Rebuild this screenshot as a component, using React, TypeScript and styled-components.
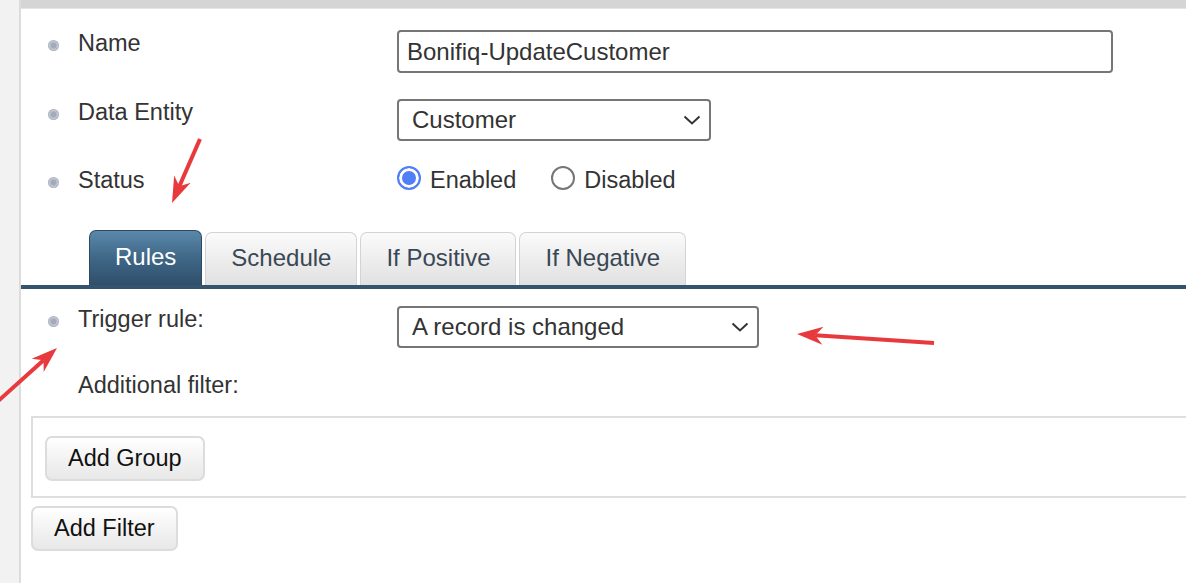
import React, { useState } from "react"
import styled, { createGlobalStyle, css } from "styled-components"

const GlobalStyle = createGlobalStyle`
  html, body {
    margin: 0;
    padding: 0;
    height: 100%;
    background: #ffffff;
    font-family: "Liberation Sans", Arial, sans-serif;
    color: #333333;
  }
  #root {
    min-height: 100vh;
  }
`

const Page = styled.div`
  position: relative;
  display: flex;
  min-height: 100vh;
  overflow: hidden;
`

const SideStrip = styled.div`
  width: 19px;
  flex: none;
  background: #f2f2f2;
  border-right: 2px solid #dcdcdc;
`

const Main = styled.div`
  flex: 1;
  display: flex;
  flex-direction: column;
  min-width: 0;
`

const TopBar = styled.div`
  height: 8px;
  background: #d5d5d5;
  border-bottom: 1px solid #e4e4e4;
`

const Form = styled.div`
  display: flex;
  flex-direction: column;
  padding-top: 21px;
`

const FieldList = styled.div`
  display: flex;
  flex-direction: column;
  gap: 26px;
`

const Row = styled.div<{ $top?: number }>`
  display: grid;
  grid-template-columns: 30px 319px 1fr;
  align-items: start;
  padding-left: 27px;
  margin-top: ${(p) => p.$top ?? 0}px;
`

const Bullet = styled.span<{ $hidden?: boolean }>`
  display: block;
  width: 11px;
  height: 11px;
  margin-top: 10px;
  border-radius: 50%;
  visibility: ${(p) => (p.$hidden ? "hidden" : "visible")};
  background: radial-gradient(
    circle at 50% 50%,
    #a3aab9 0 30%,
    #c4c9d3 50%,
    #8f96a6 85%,
    #b3b8c4 100%
  );
`

const Label = styled.span`
  font-size: 23.5px;
  line-height: 26px;
  color: #333333;
  white-space: nowrap;
`

const fieldBox = css`
  box-sizing: border-box;
  border: 2px solid #767676;
  border-radius: 4px;
  background: #ffffff;
  font-family: "Liberation Sans", Arial, sans-serif;
  font-size: 24px;
  color: #333333;
`

const TextInput = styled.input`
  ${fieldBox};
  width: 716px;
  height: 43px;
  padding: 0 8px;
  outline: none;
`

const SelectBox = styled.div<{ $width: number }>`
  ${fieldBox};
  display: flex;
  align-items: center;
  justify-content: space-between;
  width: ${(p) => p.$width}px;
  height: 42px;
  padding: 0 8px 0 13px;
`

const Chevron = () => (
  <svg width="18" height="10" viewBox="0 0 18 10">
    <path d="M1.5 1.5 L9 8.5 L16.5 1.5" fill="none" stroke="#333" strokeWidth="2" />
  </svg>
)

const RadioGroup = styled.div`
  display: flex;
  align-items: center;
  gap: 35px;
`

const RadioOption = styled.label`
  display: flex;
  align-items: center;
  gap: 9px;
  font-size: 23.5px;
  line-height: 26px;
  color: #333333;
  cursor: pointer;
`

const RadioDot = styled.span<{ $checked: boolean }>`
  box-sizing: border-box;
  width: 24px;
  height: 24px;
  border-radius: 50%;
  border: 2px solid ${(p) => (p.$checked ? "#4f7ef7" : "#767676")};
  background: ${(p) => (p.$checked ? "#4f7ef7" : "#ffffff")};
  box-shadow: ${(p) => (p.$checked ? "inset 0 0 0 3px #ffffff" : "none")};
  transform: translateY(-2px);
`

const TabStrip = styled.div`
  display: flex;
  align-items: flex-end;
  gap: 3px;
  margin-top: 37px;
  padding-left: 68px;
  border-bottom: 4px solid #33536f;
`

const Tab = styled.button<{ $active?: boolean }>`
  box-sizing: border-box;
  height: ${(p) => (p.$active ? 55 : 53)}px;
  padding: 0 25px 3px;
  border-radius: 7px 7px 0 0;
  font-family: "Liberation Sans", Arial, sans-serif;
  font-size: 24px;
  cursor: pointer;
  ${(p) =>
    p.$active
      ? css`
          color: #ffffff;
          border: 1px solid #2e4a63;
          border-bottom: none;
          background: linear-gradient(#5a88aa, #3f6787 50%, #2f4f6b);
        `
      : css`
          color: #3a4754;
          border: 1px solid #d3d3d3;
          border-bottom: none;
          background: linear-gradient(#fbfbfb, #ececec 55%, #e1e1e1);
        `}
`

const GroupBox = styled.div`
  margin: 18px -10px 0 10px;
  padding: 18px 12px 15px;
  border: 2px solid #dedede;
`

const Button = styled.button<{ $left?: number; $top?: number }>`
  box-sizing: border-box;
  height: 45px;
  padding: 0 21px;
  margin-left: ${(p) => p.$left ?? 0}px;
  margin-top: ${(p) => p.$top ?? 0}px;
  align-self: flex-start;
  border: 2px solid #dcdcdc;
  border-radius: 7px;
  background: linear-gradient(#ffffff, #f3f3f3 50%, #e8e8e8);
  font-family: "Liberation Sans", Arial, sans-serif;
  font-size: 23.5px;
  color: #111111;
  cursor: pointer;
`

const Annotations = styled.svg`
  position: absolute;
  inset: 0;
  width: 100%;
  height: 100%;
  pointer-events: none;
`

// red callout arrows: line from tail to just before the tip, then a filled head
const arrows = [
  { x1: 200, y1: 139, x2: 172, y2: 203 },
  { x1: -4, y1: 403, x2: 57, y2: 348 },
  { x1: 934, y1: 343, x2: 797, y2: 334 }
]

const Arrow = ({ x1, y1, x2, y2 }: { x1: number; y1: number; x2: number; y2: number }) => {
  const dx = x2 - x1
  const dy = y2 - y1
  const len = Math.hypot(dx, dy)
  const ux = dx / len
  const uy = dy / len
  const headLen = 26
  const headHalf = 9
  const bx = x2 - ux * headLen
  const by = y2 - uy * headLen
  const nx = -uy
  const ny = ux
  const inner = 0.7
  const head = [
    `${x2},${y2}`,
    `${bx + nx * headHalf},${by + ny * headHalf}`,
    `${x2 - ux * headLen * inner},${y2 - uy * headLen * inner}`,
    `${bx - nx * headHalf},${by - ny * headHalf}`
  ].join(" ")
  return (
    <g>
      <line
        x1={x1}
        y1={y1}
        x2={x2 - ux * headLen * inner}
        y2={y2 - uy * headLen * inner}
        stroke="#e83a3d"
        strokeWidth="4"
      />
      <polygon points={head} fill="#e83a3d" />
    </g>
  )
}

export default function App() {
  const [status, setStatus] = useState<"enabled" | "disabled">("enabled")
  const tabs = ["Rules", "Schedule", "If Positive", "If Negative"]
  const [activeTab, setActiveTab] = useState(0)

  return (
    <Page>
      <GlobalStyle />
      <SideStrip />
      <Main>
        <TopBar />
        <Form>
          <FieldList>
            <Row>
              <Bullet />
              <Label>Name</Label>
              <TextInput defaultValue="Bonifiq-UpdateCustomer" />
            </Row>
            <Row>
              <Bullet />
              <Label>Data Entity</Label>
              <SelectBox $width={314}>
                <span>Customer</span>
                <Chevron />
              </SelectBox>
            </Row>
            <Row>
              <Bullet />
              <Label>Status</Label>
              <RadioGroup>
                <RadioOption onClick={() => setStatus("enabled")}>
                  <RadioDot $checked={status === "enabled"} />
                  Enabled
                </RadioOption>
                <RadioOption onClick={() => setStatus("disabled")}>
                  <RadioDot $checked={status === "disabled"} />
                  Disabled
                </RadioOption>
              </RadioGroup>
            </Row>
          </FieldList>

          <TabStrip>
            {tabs.map((t, i) => (
              <Tab key={t} $active={i === activeTab} onClick={() => setActiveTab(i)}>
                {t}
              </Tab>
            ))}
          </TabStrip>

          <Row $top={17}>
            <Bullet />
            <Label>Trigger rule:</Label>
            <SelectBox $width={362}>
              <span>A record is changed</span>
              <Chevron />
            </SelectBox>
          </Row>
          <Row $top={24}>
            <Bullet $hidden />
            <Label>Additional filter:</Label>
          </Row>

          <GroupBox>
            <Button>Add Group</Button>
          </GroupBox>
          <Button $left={10} $top={8}>
            Add Filter
          </Button>
        </Form>
      </Main>
      <Annotations>
        {arrows.map((a, i) => (
          <Arrow key={i} {...a} />
        ))}
      </Annotations>
    </Page>
  )
}
